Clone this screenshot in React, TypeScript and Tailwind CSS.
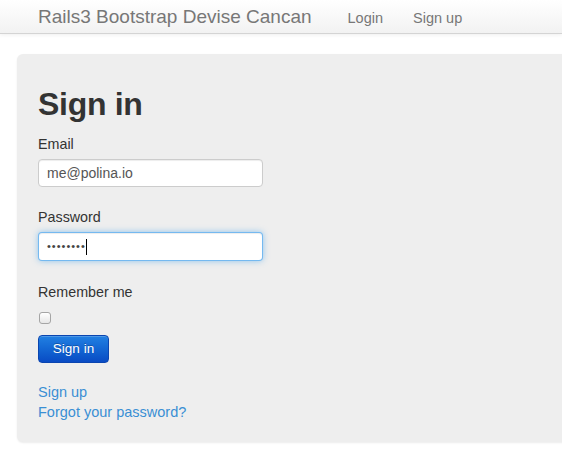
import React from "react";

export default function App() {
  return (
    <div
      className="w-[562px] h-[471px] overflow-hidden bg-white text-[#333]"
      style={{ fontFamily: '"Liberation Sans", Arial, sans-serif' }}
    >
      <div className="h-[34px] w-full bg-linear-to-b from-white to-[#f2f2f2] border-b border-[#d4d4d4] shadow-[0_1px_4px_rgba(0,0,0,0.065)] flex items-center pl-[38px]">
        <span className="text-[19px] leading-[20px] text-[#777] pr-[21px] whitespace-nowrap">
          Rails3 Bootstrap Devise Cancan
        </span>
        <nav className="flex items-center">
          <a className="px-[15px] text-[14.5px] leading-[20px] text-[#777] pt-[2px]">Login</a>
          <a className="px-[15px] text-[14.5px] leading-[20px] text-[#777] pt-[2px] whitespace-nowrap">Sign up</a>
        </nav>
      </div>

      <div className="ml-[17px] mt-[20px] w-[960px] rounded-[6px] bg-[#eeeeee] shadow-[0_1px_2px_rgba(0,0,0,0.08)] pt-[30px] pl-[21px] pb-[20px]">
        <h1 className="text-[32px] leading-[40px] font-bold text-[#333] tracking-[-0.3px]">Sign in</h1>
        <form className="flex flex-col">
          <label className="mt-[10px] text-[14.3px] leading-[20px]">Email</label>
          <div className="mt-[5px] w-[225px] h-[28px] rounded-[4px] border border-[#cccccc] bg-white shadow-[inset_0_1px_1px_rgba(0,0,0,0.075)] px-[8px] flex items-center text-[14px] text-[#555]">
            me@polina.io
          </div>
          <label className="mt-[20px] text-[14.3px] leading-[20px]">Password</label>
          <div className="mt-[5px] w-[225px] h-[29px] rounded-[4px] border border-[rgba(82,168,236,0.8)] bg-white shadow-[inset_0_1px_1px_rgba(0,0,0,0.075),0_0_6px_rgba(82,168,236,0.6)] px-[8px] flex items-center text-[11px] text-[#444] tracking-[1px]">
            <span>••••••••</span>
            <span className="inline-block w-px h-[16px] bg-black" />
          </div>
          <label className="mt-[21px] text-[14.3px] leading-[20px]">Remember me</label>
          <input
            type="checkbox"
            className="appearance-none mt-[10px] ml-px w-[12px] h-[12px] rounded-[3px] border border-[#a5a5a5] bg-linear-to-b from-white to-[#e6e6e6]"
          />
          <button
            type="button"
            className="mt-[11px] w-[71px] h-[28px] rounded-[4px] border border-[#0a45b0] bg-linear-to-b from-[#2280e2] to-[#0a4bc4] text-white text-[13.5px] [text-shadow:0_-1px_0_rgba(0,0,0,0.25)] shadow-[inset_0_1px_0_rgba(255,255,255,0.2)]"
          >
            Sign in
          </button>
          <a className="mt-[19px] text-[14.5px] leading-[20px] text-[#3a8fd4] w-fit">Sign up</a>
          <a className="text-[14.5px] leading-[20px] text-[#3a8fd4] w-fit">Forgot your password?</a>
        </form>
      </div>
    </div>
  );
}
